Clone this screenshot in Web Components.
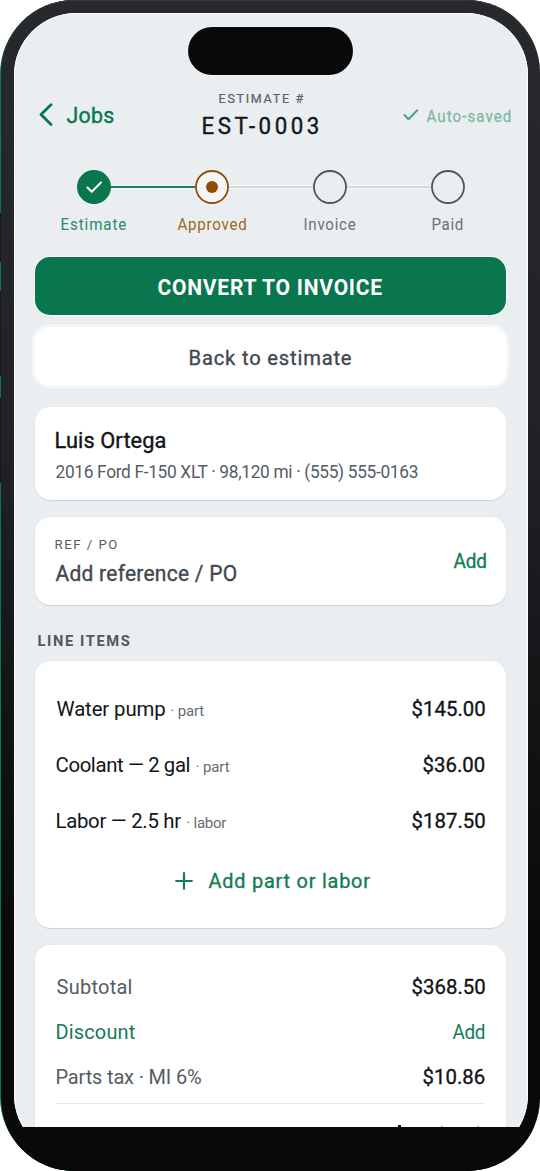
<!DOCTYPE html>
<html lang="en">
<head>
<meta charset="utf-8">
<title>Estimate EST-0003</title>
<style>
html,body{margin:0;padding:0;background:#fff}
body{width:540px;height:1171px;overflow:hidden;font-family:Roboto,"Open Sans",sans-serif;color:#111417}
</style>
</head>
<body>
<estimate-page></estimate-page>
<script>
const pen = document.createElement('canvas').getContext('2d');
const define = (name, html) => customElements.define(name, class extends HTMLElement {
  constructor() {
    super();
    this.attachShadow({ mode: 'open' }).innerHTML = html;
  }
});

/* One line of type set to a measure: w = width, s = size, b = weight, k = glyph width factor.
   Weight 450 is regular with a light stroke, between regular and medium. */
customElements.define('type-line', class extends HTMLElement {
  connectedCallback() {
    const w = +this.getAttribute('w'), s = +this.getAttribute('s');
    const half = this.getAttribute('b') === '450';
    const b = half ? 400 : this.getAttribute('b') || 400, k = +(this.getAttribute('k') || 0.97);
    const text = this.getAttribute('text');
    pen.font = `${b} ${s}px Roboto, "Open Sans", sans-serif`;
    const m = pen.measureText(text);
    const left = m.actualBoundingBoxLeft, ink = m.actualBoundingBoxRight + left;
    const gap = ((w - 0.5) / k - ink) / (text.length - 1);
    const root = this.shadowRoot || this.attachShadow({ mode: 'open' });
    root.innerHTML = `<style>
      :host{display:block;flex:none;width:${w}px;height:${Math.round(s * 1.2)}px;white-space:pre}
      span{display:inline-block;font-size:${s}px;line-height:${Math.round(s * 1.2)}px;font-weight:${b};
        -webkit-text-stroke:${half ? s * 0.017 : 0}px currentColor;
        letter-spacing:${gap}px;transform-origin:0 50%;transform:translateX(${left * k + 0.5}px) scaleX(${k})}
    </style><span></span>`;
    root.querySelector('span').textContent = text;
  }
});

define('surface-card', `<style>
  :host{display:flex;flex-direction:column;box-sizing:border-box;background:#fff;border-radius:15px;
    box-shadow:0 1px 1px #cdd3d7,0 0 1px #d8dde0}
</style><slot></slot>`);

define('page-header', `<style>
  :host{display:grid;grid-template-columns:159px 1fr 109px;height:62px;padding:0 17px 0 25px}
  .back,.saved{display:flex;align-items:center;height:50px}
  .back{color:#09764d;gap:13px}
  .back svg{margin-bottom:2px}
  .mid{display:flex;flex-direction:column;align-items:flex-start;color:#15181b;padding-left:4px;margin-top:-3px}
  .mid .small{color:#59616a;margin:0 0 9px 16.5px}
  .saved{color:#80b9a2;gap:7.5px}
  .saved svg{margin:0 0 2px .5px}
</style>
<div class="back"><svg width="14" height="24" viewBox="0 0 14 24" fill="none" stroke="currentColor" stroke-width="2.8" stroke-linecap="round" stroke-linejoin="round"><path d="M12 1.8 2 11.5 12 21.5"/></svg>
<type-line text="Jobs" w="48" s="22" b="450"></type-line></div>
<div class="mid"><type-line class="small" text="ESTIMATE #" w="85" s="13.3" b="450" k=".94"></type-line>
<type-line text="EST-0003" w="116.5" s="23" b="450"></type-line></div>
<div class="saved"><svg width="16" height="14" viewBox="0 0 16 14" fill="none" stroke="#4fa283" stroke-width="2" stroke-linecap="round" stroke-linejoin="round"><path d="m1.5 7 4 4.2L14.2 2.2"/></svg>
<type-line text="Auto-saved" w="84.5" s="15.6" b="450"></type-line></div>`);

define('progress-step', `<style>
  :host{display:flex;flex-direction:column;align-items:center;width:118px;gap:10.5px;color:#6a727a;flex:none}
  .row{display:grid;grid-template-columns:1fr 34px 1fr;align-items:center;width:100%}
  i{height:2px;border:solid #f3f5f6;border-width:1px 0}
  .l{background:var(--l,transparent)}.r{background:var(--r,transparent)}
  :host([first]) .l,:host([last]) .r{visibility:hidden}
</style><div class="row"><i class="l"></i><slot></slot><i class="r"></i></div><slot name="label"></slot>`);

define('progress-steps', `<style>
  :host{display:flex;margin-left:20.5px;height:87px}
  svg{display:block;width:34px;height:34px}
  .a{--r:#17805a;color:#2b8a66}.b{--l:#17805a;--r:#d5dadd;color:#a16621}
  .c{--l:#d5dadd;--r:#d5dadd}.d{--l:#d5dadd}
</style>
<progress-step first class="a"><svg viewBox="0 0 34 34"><circle cx="17" cy="17" r="17" fill="#09764d"/><path d="m10.5 17.5 4.2 4.2 9.3-9.2" fill="none" stroke="#fff" stroke-width="2" stroke-linecap="round" stroke-linejoin="round"/></svg><type-line slot="label" text="Estimate" w="65" s="15.6"></type-line></progress-step>
<progress-step class="b"><svg viewBox="0 0 34 34"><circle cx="17" cy="17" r="16" fill="#f3f5f6" stroke="#914b05" stroke-width="1.8"/><circle cx="17" cy="17" r="6" fill="#914b05"/></svg><type-line slot="label" text="Approved" w="69" s="15.6"></type-line></progress-step>
<progress-step class="c"><svg viewBox="0 0 34 34"><circle cx="17" cy="17" r="16" fill="none" stroke="#4d545c" stroke-width="1.8"/></svg><type-line slot="label" text="Invoice" w="51.5" s="15.6"></type-line></progress-step>
<progress-step last class="d"><svg viewBox="0 0 34 34"><circle cx="17" cy="17" r="16" fill="none" stroke="#4d545c" stroke-width="1.8"/></svg><type-line slot="label" text="Paid" w="30.5" s="15.6"></type-line></progress-step>`);

define('action-button', `<style>
  :host{display:flex;align-items:center;justify-content:center;box-sizing:border-box;border-radius:15px;padding:5px 0 0}
  :host([kind=primary]){height:57.5px;background:#09764d;color:#fff;box-shadow:0 0 0 1px #f8fafa}
  :host([kind=plain]){height:59px;margin:0 -1px;background:#fff;color:#414850;box-shadow:0 0 0 1px #eceff1,0 0 0 2px #f9fafb}
</style><slot></slot>`);

define('money-row', `<style>
  :host{display:flex;align-items:center;justify-content:space-between;height:var(--h,56px);flex:none}
  .name{display:flex;align-items:baseline;gap:6px}
  ::slotted(.tag){color:#656d75}
</style><div class="name"><slot></slot></div><slot name="value"></slot>`);

define('phone-frame', `<style>
  :host{display:block;position:relative;width:540px;height:1171px;overflow:hidden;background:#fff}
  .edge{position:absolute;left:0;top:0;width:539px;height:1171px;border-radius:74px;background:#09764d}
  .key{position:absolute;left:0;width:2px;background:#16181a}
  .body{position:absolute;left:1px;top:0;width:539px;height:1171px;border-radius:73px;overflow:hidden;
    background:linear-gradient(#28292d,#202226 38%,#121416 60%,#090909 82%,#090909);box-shadow:inset 0 1px #36383b}
  .screen{position:absolute;left:13px;top:13px;width:514px;height:1144px;border-radius:62px;background:#eaeef1;
    overflow:hidden;box-shadow:inset 0 0 0 1px #fafbfb}
  .island{position:absolute;left:187px;top:27.4px;width:165px;height:48px;border-radius:24px;background:#090909;box-shadow:0 0 0 1px #f2f4f5}
  .chin{position:absolute;left:0;right:0;top:1127.4px;bottom:0;background:#090909}
</style>
<div class="edge"></div>
<div class="key" style="top:213px;height:49px"></div><div class="key" style="top:291px;height:85px"></div><div class="key" style="top:398px;height:85px"></div>
<div class="body"><div class="screen"><slot></slot></div><div class="island"></div><div class="chin"></div></div>`);

define('estimate-page', `<style>
  :host{display:block}
  main{display:flex;flex-direction:column;padding-top:78px}
  .stack{display:flex;flex-direction:column;margin:0 22px 0 20.7px}
  .muted{color:#545c65}.green{color:#147b54}
  .customer{height:93.5px;padding:21px 20.5px 0;gap:7px;margin-top:21px}
  .ref{height:88px;margin-top:16.5px;padding:2px 20px 0 20.5px;flex-direction:row;justify-content:space-between;align-items:center}
  .ref div{display:flex;flex-direction:column;gap:11px;margin-bottom:3px}
  .title{color:#50575f;margin:26px 0 0 2.5px}
  .items{height:267px;margin-top:12.5px;padding:20px 21.5px 0 21.5px}
  .add{display:flex;align-items:center;justify-content:center;gap:15px;height:64px;padding-left:4px;color:#147b54}
  .totals{height:230px;margin-top:17px;padding:20px 21.5px 0 21.5px;--h:45px}
  hr{border:0;height:1px;background:#e5e9eb;margin:3px 0 0;width:100%}
  .peek{display:flex;align-items:flex-end;height:23px;padding-left:342px;color:#111}
  .peek b{width:3px;height:2px;background:#111}
  .peek u{width:2px;height:1px;background:#aaa;margin-left:40px}.peek u+u{margin-left:34px}
</style>
<phone-frame><main>
  <page-header></page-header>
  <progress-steps style="margin-top:17px"></progress-steps>
  <div class="stack">
    <action-button kind="primary"><type-line text="CONVERT TO INVOICE" w="226" s="21.7" b="700"></type-line></action-button>
    <action-button kind="plain" style="margin-top:12px"><type-line text="Back to estimate" w="162.5" s="20.8" b="450"></type-line></action-button>
    <surface-card class="customer">
      <type-line text="Luis Ortega" w="110.5" s="22" b="450" k=".99"></type-line>
      <type-line class="muted" text="2016 Ford F-150 XLT · 98,120 mi · (555) 555-0163" w="363.5" s="18.2" k=".95"></type-line>
    </surface-card>
    <surface-card class="ref"><div>
      <type-line class="muted" text="REF / PO" w="62" s="13.6"></type-line>
      <type-line style="color:#42494f" text="Add reference / PO" w="181.5" s="21.2" b="450" k=".99"></type-line></div>
      <type-line class="green" text="Add" w="33" s="19.5" b="450"></type-line>
    </surface-card>
    <type-line class="title" text="LINE ITEMS" w="92.5" s="15.2" b="700"></type-line>
    <surface-card class="items">
      <money-row><type-line text="Water pump" w="109" s="21"></type-line><type-line class="tag" text="· part" w="33" s="15.5"></type-line><type-line slot="value" text="$145.00" w="73" s="21" b="450"></type-line></money-row>
      <money-row><type-line text="Coolant — 2 gal" w="133.5" s="21"></type-line><type-line class="tag" text="· part" w="33.5" s="15.5"></type-line><type-line slot="value" text="$36.00" w="61.5" s="21" b="450"></type-line></money-row>
      <money-row><type-line text="Labor — 2.5 hr" w="125" s="21"></type-line><type-line class="tag" text="· labor" w="40" s="15.5"></type-line><type-line slot="value" text="$187.50" w="73" s="21" b="450"></type-line></money-row>
      <div class="add"><svg width="18" height="18" viewBox="0 0 18 18" stroke="currentColor" stroke-width="2.2" stroke-linecap="round"><path d="M9 1.2v15.6M1.2 9h15.6"/></svg><type-line text="Add part or labor" w="162" s="20.5" b="450"></type-line></div>
    </surface-card>
    <surface-card class="totals">
      <money-row><type-line class="muted" text="Subtotal" w="75.5" s="20.6"></type-line><type-line slot="value" text="$368.50" w="73" s="21" b="450"></type-line></money-row>
      <money-row class="green"><type-line text="Discount" w="79.5" s="20.6"></type-line><type-line slot="value" text="Add" w="32.5" s="19.5"></type-line></money-row>
      <money-row><type-line class="muted" text="Parts tax · MI 6%" w="145.5" s="20.6"></type-line><type-line slot="value" text="$10.86" w="61.5" s="21" b="450"></type-line></money-row>
      <hr><div class="peek"><b></b><u></u><u></u></div>
    </surface-card>
  </div>
</main></phone-frame>`);
</script>
</body>
</html>
